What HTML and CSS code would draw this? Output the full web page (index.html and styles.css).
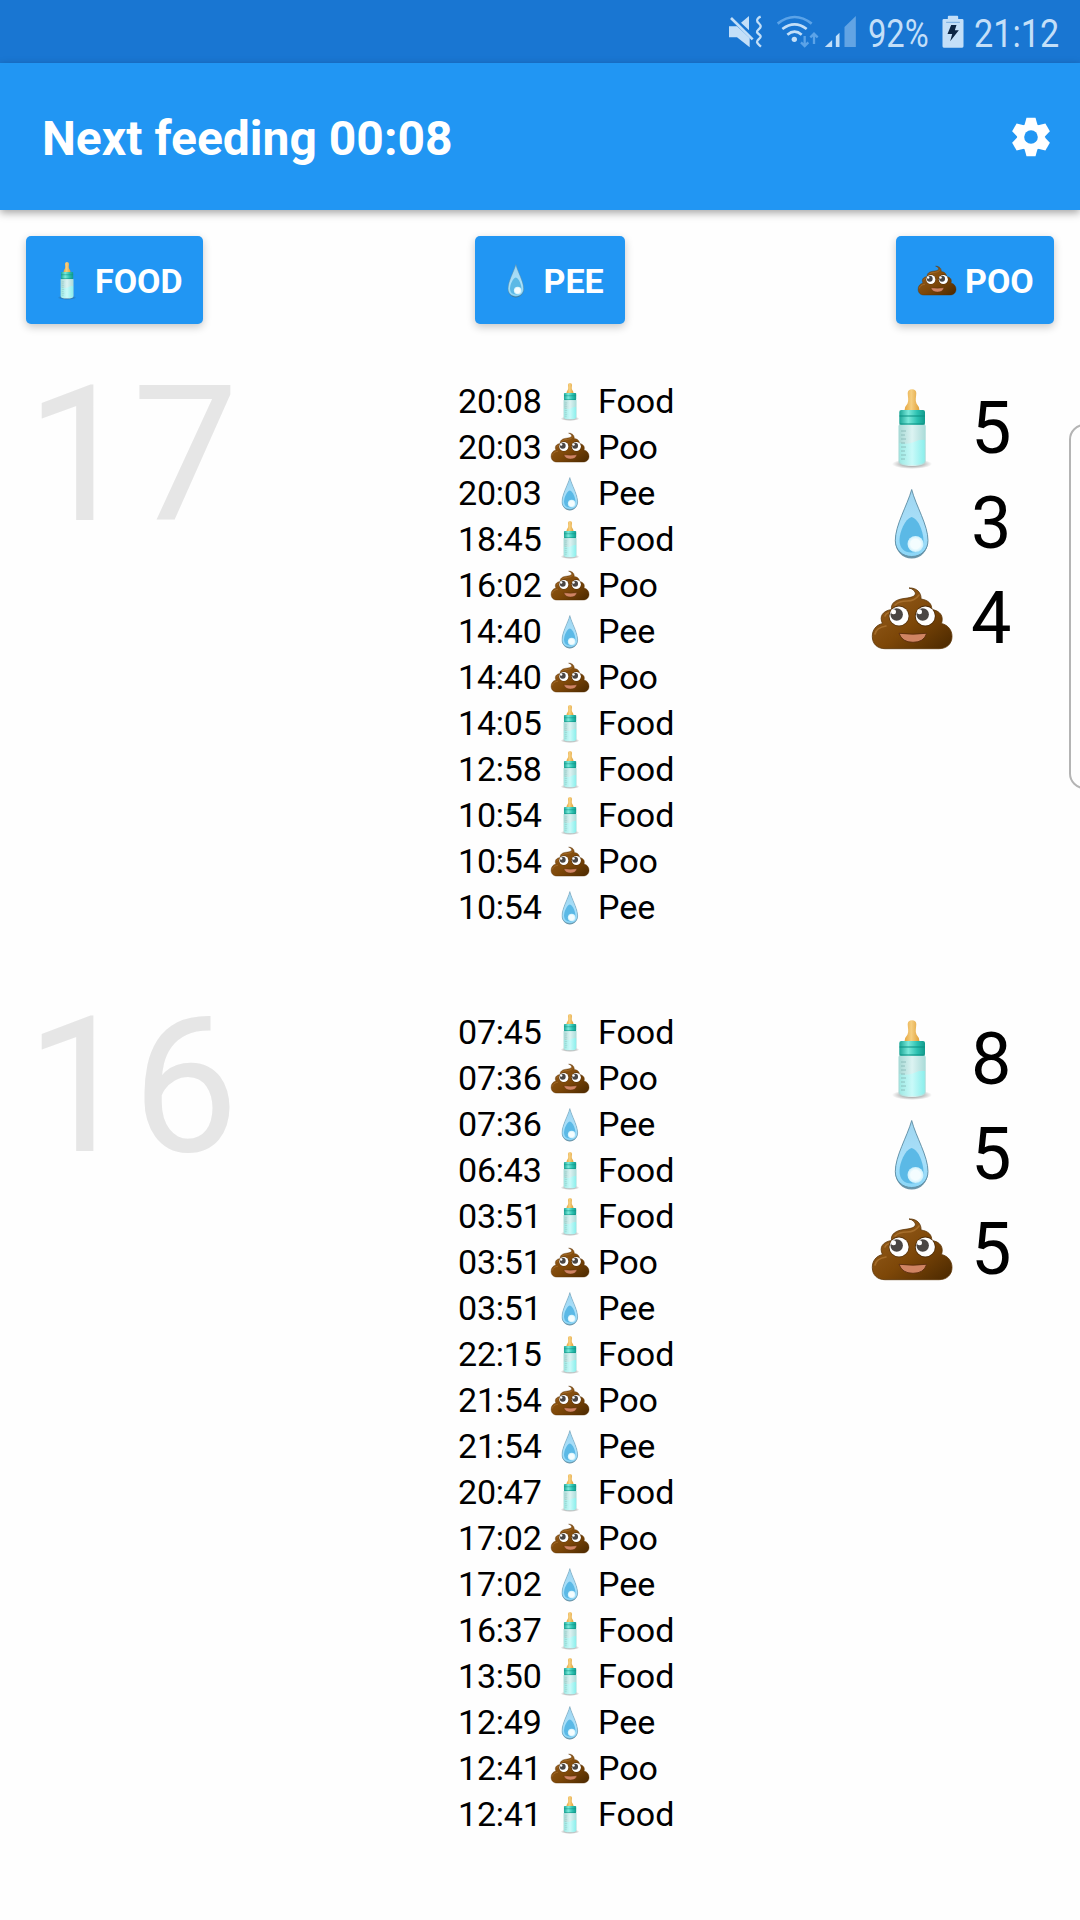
FILE: index.html
```
<!DOCTYPE html>
<html lang="en">
<head>
<meta charset="utf-8">
<title>Next feeding</title>
<link rel="stylesheet" href="styles.css">
</head>
<body>
<svg class="defs" aria-hidden="true">
  <defs>
    <linearGradient id="teat" x1="0" x2="1"><stop offset="0" stop-color="#e5a640"/><stop offset=".45" stop-color="#f6cf80"/><stop offset="1" stop-color="#dfa03a"/></linearGradient>
    <linearGradient id="collar" x1="0" x2="1"><stop offset="0" stop-color="#1aa596"/><stop offset=".35" stop-color="#7be9da"/><stop offset=".7" stop-color="#2bc0b0"/><stop offset="1" stop-color="#129a8c"/></linearGradient>
    <linearGradient id="milk" x1="0" x2="1"><stop offset="0" stop-color="#9fe9e4"/><stop offset=".5" stop-color="#c9faf9"/><stop offset="1" stop-color="#8cefec"/></linearGradient>
    <linearGradient id="glass" x1="0" x2="1"><stop offset="0" stop-color="#a5d8d4"/><stop offset=".5" stop-color="#dcf3f2"/><stop offset="1" stop-color="#a9dbd8"/></linearGradient>
    <radialGradient id="shade"><stop offset="0" stop-color="#333" stop-opacity=".7"/><stop offset="1" stop-color="#333" stop-opacity="0"/></radialGradient>
    <linearGradient id="water" x1="0" y1="0" x2="0" y2="1"><stop offset="0" stop-color="#9fd5f0"/><stop offset=".6" stop-color="#a9e0fa"/><stop offset="1" stop-color="#8bd6f7"/></linearGradient>
    <radialGradient id="glow"><stop offset=".6" stop-color="#f4fdff"/><stop offset="1" stop-color="#c9effc"/></radialGradient>
    <linearGradient id="brown" x1="0" y1="0" x2="1" y2="1"><stop offset="0" stop-color="#9a6222"/><stop offset=".55" stop-color="#7d4708"/><stop offset="1" stop-color="#4a2800"/></linearGradient>
    <symbol id="bottle" viewBox="0 0 84 84">
      <ellipse cx="42" cy="79" rx="20" ry="5" fill="url(#shade)"/>
      <path d="M28.500 41Q28.500 39.500 30 39.500H54Q55.700 39.500 55.700 41V76Q55.700 81 42 81T28.500 76Z" fill="url(#glass)"/>
      <path d="M29.500 58Q38 60 44 57T54.700 55V76Q54 80 42 80T29.500 76Z" fill="url(#milk)"/>
      <path d="M31 46h5M31 50h4M31 54h5M31 58h4M31 62h5M31 66h4M31 70h5M31 74h4" stroke="#84b5b2" stroke-width=".8"/>
      <path d="M34.500 25.500Q35 21 37.500 18.500C39 15 37.700 12 37.700 8Q38 4.300 42 4.300T46.300 8C46.300 12 45 15 46.500 18.500Q49 21 49.500 25.500Z" fill="url(#teat)"/>
      <rect x="29.300" y="25" width="25.700" height="14.800" rx="2" fill="url(#collar)"/>
      <path d="M29.500 31H54.800M29.500 39H54.800" stroke="#0a8f81" stroke-width="1.100"/>
    </symbol>
    <symbol id="drop" viewBox="0 0 84 84">
      <path d="M41.700 11C46 27 58 45 58 61.500C58 71 51 78.500 41.700 78.500S25.300 71 25.300 61.500C25.300 45 37 27 41.700 11Z" fill="#39718c" opacity=".75"/>
      <path d="M41.700 9.500C46 26 58 45 58 60.500C58 70 51 76.500 41.700 76.500S25.300 70 25.300 60.500C25.300 45 37 26 41.700 9.500Z" fill="url(#water)" stroke="#5d8ca3" stroke-width=".9"/>
      <path d="M41.500 37C49 39 53.500 53 53.500 61S49 72.500 41.500 72.500S29.500 68 29.500 60S35 39 41.500 37Z" fill="#5bb9e6"/>
      <circle cx="45.500" cy="64" r="8" fill="url(#glow)"/>
    </symbol>
    <symbol id="poo" viewBox="0 0 84 84">
      <path d="M39 13C47 12.500 51.500 18 51 24C58 25 62.500 29 61.500 34.500C70 35.500 74 41 71.500 48.500C78 50 82 55 82 61.500C82 69 76.500 73.700 69 73.700H15C7.500 73.700 2.300 69 2.300 61.500C2.300 55 6 50 12.500 48.500C9 41.500 12.500 36 21.500 34.500C20.500 28 26 24.500 34 23.500C43 22.500 48 20.500 44 15.500Q42 13.500 39 13Z" fill="url(#brown)" stroke="#5a3305" stroke-width=".8"/>
      <path d="M5 59C6 54 10 52 16 51M15 41C16 38 20 37 24 37M25 30Q29 26 37 26T49 20" fill="none" stroke="#b9803c" stroke-width="1.600" stroke-linecap="round" opacity=".6"/>
      <circle cx="29" cy="41" r="10.400" fill="#5a360e"/><circle cx="55.300" cy="41" r="10.400" fill="#4c2b07"/>
      <circle cx="29" cy="41" r="9.600" fill="#fff"/><circle cx="55.300" cy="41" r="9.600" fill="#fff"/>
      <circle cx="26.700" cy="39.500" r="6.200" fill="#4a4644"/><circle cx="52.700" cy="39.500" r="6.200" fill="#4a4644"/>
      <circle cx="23.500" cy="36.800" r="2.500" fill="#fff"/><circle cx="49.500" cy="36.800" r="2.500" fill="#fff"/>
      <path d="M29 58.300Q43 60 56.700 58.300Q54 67.300 43 67.300T29 58.300Z" fill="#d08463" stroke="#5a2d0c" stroke-width=".9"/>
    </symbol>
  </defs>
</svg>

<header class="status">
  <svg class="status-mute" viewBox="85 45 105 99">
    <path class="lit" d="M88 79H112L122 88L150 114V142L112 112H88ZM148 48V91L124 68Z"/>
    <path class="line" d="M94 54L159 118" stroke-width="8"/>
    <path class="line" d="M183 50C175 53 170 60 173 65S184 73 183 80S171 90 172 96S184 104 183 110S171 120 172 126S180 136 184 140" stroke-width="7"/>
  </svg>
  <svg class="status-wifi" viewBox="230 45 130 99">
    <path class="line dim" d="M234 71Q285 31 336 71" stroke-width="8"/>
    <path class="line" d="M248 87Q285 59 321 87M263 104Q285 86 306 104" stroke-width="8"/>
    <circle class="lit" cx="284" cy="118" r="8"/>
    <path class="line dim" d="M315 108V137M304 127L315 138L326 127M343 132V101M332 112L343 101L354 112" stroke-width="7"/>
  </svg>
  <svg class="status-signal" viewBox="372 45 98 99">
    <path class="lit" d="M374 141L396 120V141ZM407 109L418 98V141H407Z"/>
    <path class="faded" d="M433 81L467 48V141H433Z"/>
  </svg>
  <span class="status-text charge"><span>92%</span></span>
  <svg class="status-battery" viewBox="725 45 65 99">
    <path class="lit" d="M742 50Q742 47 745 47H770Q773 47 773 50V57H785Q789 57 789 61V139Q789 143 785 143H730Q726 143 726 139V61Q726 57 730 57H742Z"/>
    <path d="M737 67H778" stroke="#4b8fd4" stroke-width="2"/>
    <path d="M752 75H768L763 91H775L749 124L755 102H741Z" fill="#0c2544"/>
  </svg>
  <span class="status-text clock"><span>21:12</span></span>
</header>

<nav class="appbar">
  <h1>Next feeding 00:08</h1>
  <svg class="gear" viewBox="-20 -20 40 40">
    <circle r="13.800"/>
    <path d="M-6.500 -12L-4.500 -19.200H4.500L6.500 -12V12L4.500 19.200H-4.500L-6.500 12Z"/>
    <path transform="rotate(60)" d="M-6.500 -12L-4.500 -19.200H4.500L6.500 -12V12L4.500 19.200H-4.500L-6.500 12Z"/>
    <path transform="rotate(120)" d="M-6.500 -12L-4.500 -19.200H4.500L6.500 -12V12L4.500 19.200H-4.500L-6.500 12Z"/>
    <circle class="hole" r="6.800"/>
  </svg>
</nav>

<main>
  <div class="actions">
    <button class="food"><svg><use href="#bottle"/></svg><span>FOOD</span></button>
    <button class="pee"><svg><use href="#drop"/></svg><span>PEE</span></button>
    <button class="poo"><svg><use href="#poo"/></svg><span>POO</span></button>
  </div>

  <section class="day">
    <h2>17</h2>
    <ul class="log">
      <li><time>20:08</time><svg><use href="#bottle"/></svg>Food</li>
      <li><time>20:03</time><svg><use href="#poo"/></svg>Poo</li>
      <li><time>20:03</time><svg><use href="#drop"/></svg>Pee</li>
      <li><time>18:45</time><svg><use href="#bottle"/></svg>Food</li>
      <li><time>16:02</time><svg><use href="#poo"/></svg>Poo</li>
      <li><time>14:40</time><svg><use href="#drop"/></svg>Pee</li>
      <li><time>14:40</time><svg><use href="#poo"/></svg>Poo</li>
      <li><time>14:05</time><svg><use href="#bottle"/></svg>Food</li>
      <li><time>12:58</time><svg><use href="#bottle"/></svg>Food</li>
      <li><time>10:54</time><svg><use href="#bottle"/></svg>Food</li>
      <li><time>10:54</time><svg><use href="#poo"/></svg>Poo</li>
      <li><time>10:54</time><svg><use href="#drop"/></svg>Pee</li>
    </ul>
    <ul class="totals">
      <li><svg><use href="#bottle"/></svg><span>5</span></li>
      <li><svg><use href="#drop"/></svg><span>3</span></li>
      <li><svg><use href="#poo"/></svg><span>4</span></li>
    </ul>
  </section>

  <section class="day">
    <h2>16</h2>
    <ul class="log">
      <li><time>07:45</time><svg><use href="#bottle"/></svg>Food</li>
      <li><time>07:36</time><svg><use href="#poo"/></svg>Poo</li>
      <li><time>07:36</time><svg><use href="#drop"/></svg>Pee</li>
      <li><time>06:43</time><svg><use href="#bottle"/></svg>Food</li>
      <li><time>03:51</time><svg><use href="#bottle"/></svg>Food</li>
      <li><time>03:51</time><svg><use href="#poo"/></svg>Poo</li>
      <li><time>03:51</time><svg><use href="#drop"/></svg>Pee</li>
      <li><time>22:15</time><svg><use href="#bottle"/></svg>Food</li>
      <li><time>21:54</time><svg><use href="#poo"/></svg>Poo</li>
      <li><time>21:54</time><svg><use href="#drop"/></svg>Pee</li>
      <li><time>20:47</time><svg><use href="#bottle"/></svg>Food</li>
      <li><time>17:02</time><svg><use href="#poo"/></svg>Poo</li>
      <li><time>17:02</time><svg><use href="#drop"/></svg>Pee</li>
      <li><time>16:37</time><svg><use href="#bottle"/></svg>Food</li>
      <li><time>13:50</time><svg><use href="#bottle"/></svg>Food</li>
      <li><time>12:49</time><svg><use href="#drop"/></svg>Pee</li>
      <li><time>12:41</time><svg><use href="#poo"/></svg>Poo</li>
      <li><time>12:41</time><svg><use href="#bottle"/></svg>Food</li>
    </ul>
    <ul class="totals">
      <li><svg><use href="#bottle"/></svg><span>8</span></li>
      <li><svg><use href="#drop"/></svg><span>5</span></li>
      <li><svg><use href="#poo"/></svg><span>5</span></li>
    </ul>
  </section>
</main>
<div class="edge-handle"></div>
</body>
</html>
```
FILE: styles.css
```
* { box-sizing: border-box; }
body {
  margin: 0;
  position: relative;
  height: 1920px;
  overflow: hidden;
  background: #fefefe;
  color: #000;
  font-family: Roboto, sans-serif;
}
ul, h1, h2 { margin: 0; padding: 0; list-style: none; }
svg { display: block; flex: none; }
.defs { position: absolute; width: 0; height: 0; }

.status {
  display: flex;
  align-items: flex-start;
  justify-content: flex-end;
  height: 63px;
  padding: 15px 19px 0 0;
  background: #1976d2;
}
.status svg { height: 33px; }
.status .lit { fill: #c3dff8; }
.status .faded { fill: #62a4e4; }
.status .line { fill: none; stroke: #c3dff8; }
.status .line.dim { stroke: #5ba3e8; }
.status-mute { width: 35px; margin-right: 13px; }
.status-wifi { width: 44px; margin-right: 4px; }
.status-signal { width: 33px; margin-right: 11px; }
.status-battery { width: 22px; margin-right: 10px; }
.status-text {
  height: 38px;
  font-size: 38px;
  line-height: 38px;
  color: #c3dff8;
}
.status-text span { display: block; transform: scaleX(.9); transform-origin: 0 0; }
.charge { width: 74px; }
.charge span { transform: scaleX(.86); }
.clock { width: 87px; }

.appbar {
  position: relative;
  display: flex;
  align-items: center;
  justify-content: space-between;
  height: 147px;
  padding: 0 29px 0 42px;
  background: #2196f3;
  box-shadow: 0 3px 8px rgba(0, 0, 0, .35);
}
.appbar h1 { padding-top: 4px; color: #fff; font-size: 48px; line-height: 56px; font-weight: 700; }
.gear { width: 40px; height: 40px; fill: #fff; }
.gear .hole { fill: #2196f3; }

.actions {
  display: flex;
  justify-content: space-between;
  padding: 26px 26px 0;
}
.actions button {
  display: flex;
  align-items: center;
  gap: 8px;
  height: 88px;
  padding: 0 0 0 21px;
  border: 0;
  border-radius: 5px;
  background: #2196f3;
  box-shadow: 0 3px 9px rgba(0, 0, 0, .22);
  color: #fff;
  font: 700 34px/40px Roboto, sans-serif;
}
.actions span { padding-top: 2px; }
.actions svg { width: 40px; height: 40px; }
.food { width: 177px; }
.pee { width: 150px; }
.poo { width: 158px; }

.day {
  display: grid;
  grid-template-columns: 432px 412px 210px;
  padding: 54px 0 0 26px;
}
.day + .day { padding-top: 79px; }
h2 { padding-top: 3px; color: #e6e6e6; font-size: 189px; line-height: 150px; font-weight: 400; }
.log { font-size: 34px; line-height: 46px; }
.log li { display: flex; align-items: center; height: 46px; }
.log time { width: 92px; letter-spacing: -.2px; }
.log svg { width: 40px; height: 40px; margin-right: 8px; }
.totals { font-size: 72px; line-height: 95px; padding-top: 1px; }
.totals li { display: flex; align-items: center; height: 95px; }
.totals svg { width: 84px; height: 84px; margin-right: 17px; }
.totals span { height: 95px; padding-top: 2px; }

.edge-handle {
  position: absolute;
  top: 424px;
  right: -20px;
  width: 31px;
  height: 365px;
  border: 2px solid #b4b4b4;
  border-radius: 16px;
}
```
